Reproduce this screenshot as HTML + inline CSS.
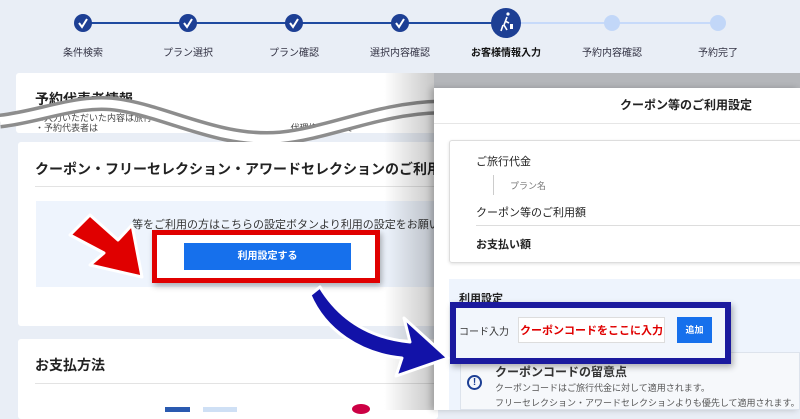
<!DOCTYPE html>
<html><head><meta charset="utf-8"><style>
*{margin:0;padding:0;box-sizing:border-box}
body{width:800px;height:410px;overflow:hidden;background:#e9eef6;font-family:"Liberation Sans","Noto Sans CJK JP",sans-serif;position:relative;color:#222}
.a{position:absolute}
.lbl{position:absolute;top:44px;font-size:10px;color:#334;width:100px;text-align:center}
.card{position:absolute;background:#fff;border-radius:3px}
</style></head><body>
<div class="a" style="left:83px;top:22px;width:423px;height:2px;background:#1f4aa0"></div>
<div class="a" style="left:506px;top:22px;width:212px;height:2px;background:#c7dafa"></div>
<svg class="a" style="left:0;top:0" width="800" height="45">
<g fill="#1d3f94">
<circle cx="83" cy="23" r="9"/><circle cx="188" cy="23" r="9"/><circle cx="294" cy="23" r="9"/><circle cx="400" cy="23" r="9"/><circle cx="506" cy="23" r="15"/></g>
<g fill="#c2d7f8"><circle cx="612" cy="23" r="8"/><circle cx="718" cy="23" r="8"/></g>
<g stroke="#fff" stroke-width="2" fill="none"><path d="M79 23l3 4 5-8M184 23l3 4 5-8M290 23l3 4 5-8M396 23l3 4 5-8"/>
<path d="M507 17l-3 8 3 5M505 21l4 2M503 25l-2 6" stroke-width="1.6"/></g>
<circle cx="508" cy="14" r="1.6" fill="#fff"/><rect x="510" y="24" width="3" height="5" fill="#fff"/>
</svg>
<div class="lbl" style="left:33px">条件検索</div>
<div class="lbl" style="left:138px">プラン選択</div>
<div class="lbl" style="left:244px">プラン確認</div>
<div class="lbl" style="left:350px">選択内容確認</div>
<div class="lbl" style="left:456px;font-weight:bold;color:#111">お客様情報入力</div>
<div class="lbl" style="left:562px">予約内容確認</div>
<div class="lbl" style="left:668px">予約完了</div>

<div class="card" style="left:16px;top:73px;width:502px;height:60px"></div>
<div class="card" style="left:534px;top:73px;width:266px;height:60px;background:#f3f4f6"></div>
<div class="a" style="left:35px;top:89px;font-size:14px;font-weight:bold">予約代表者情報</div>
<div class="a" style="left:35px;top:111px;font-size:9px;color:#444">※入力いただいた内容は旅行</div>
<div class="a" style="left:35px;top:121px;font-size:9px;color:#444">・予約代表者は <span style="margin-left:190px">代理権を有して</span></div>
<svg class="a" style="left:0;top:93px" width="440" height="60">
<path d="M0 28 C40 24,80 5,120 12 C170 20,220 50,280 45 C330 40,380 15,440 14" fill="none" stroke="#8d8d8d" stroke-width="15"/>
<path d="M0 28 C40 24,80 5,120 12 C170 20,220 50,280 45 C330 40,380 15,440 14" fill="none" stroke="#fff" stroke-width="8"/>
</svg>

<div class="card" style="left:18px;top:142px;width:420px;height:184px"></div>
<div class="a" style="left:35px;top:159px;font-size:14px;font-weight:bold;white-space:nowrap">クーポン・フリーセレクション・アワードセレクションのご利用</div>
<div class="a" style="left:35px;top:186px;width:400px;height:1px;background:#e3e3e3"></div>
<div class="a" style="left:36px;top:201px;width:400px;height:86px;background:#eef4fd"></div>
<div class="a" style="left:132px;top:216px;font-size:11px;color:#333;white-space:nowrap">等をご利用の方はこちらの設定ボタンより利用の設定をお願いします</div>
<div class="a" style="left:152px;top:230px;width:228px;height:53px;border:5px solid #e00000;background:#fff;box-shadow:2px 3px 6px rgba(0,0,0,.3)"></div>
<div class="a" style="left:184px;top:243px;width:167px;height:27px;background:#1670ec;color:#fff;font-size:10px;font-weight:bold;text-align:center;line-height:27px">利用設定する</div>
<svg class="a" style="left:60px;top:195px" width="100" height="90"><path d="M10 40 L30 20 L58 45 L72 30 L82 82 L30 70 L44 58 Z" fill="#e00000" stroke="#fff" stroke-width="3" stroke-linejoin="round"/></svg>

<div class="card" style="left:18px;top:339px;width:420px;height:80px"></div>
<div class="a" style="left:35px;top:355px;font-size:14px;font-weight:bold">お支払方法</div>
<div class="a" style="left:35px;top:383px;width:400px;height:1px;background:#e3e3e3"></div>
<div class="a" style="left:165px;top:407px;width:25px;height:5px;background:#2a5ab0"></div>
<div class="a" style="left:203px;top:407px;width:34px;height:5px;background:#cfe0f5"></div>
<div class="a" style="left:352px;top:404px;width:18px;height:10px;border-radius:50%;background:#c04"></div>

<div class="a" style="left:384px;top:73px;width:50px;height:337px;background:linear-gradient(90deg,rgba(0,0,0,0),rgba(0,0,0,.22))"></div>
<div class="a" style="left:434px;top:73px;width:366px;height:16px;background:#b4b6ba"></div>

<div class="a" style="left:434px;top:88px;width:366px;height:322px;background:#fff;box-shadow:-3px 0 6px rgba(0,0,0,.2)"></div>
<div class="a" style="left:620px;top:96px;font-size:12px;font-weight:bold;white-space:nowrap">クーポン等のご利用設定</div>
<div class="a" style="left:434px;top:123px;width:366px;height:1px;background:#e6e6e6"></div>
<div class="a" style="left:449px;top:140px;width:360px;height:123px;border:1px solid #ddd;border-radius:3px;box-shadow:0 1px 3px rgba(0,0,0,.12)"></div>
<div class="a" style="left:476px;top:153px;font-size:11px">ご旅行代金</div>
<div class="a" style="left:493px;top:175px;width:1px;height:20px;background:#ccc"></div>
<div class="a" style="left:510px;top:179px;font-size:9px;color:#777">プラン名</div>
<div class="a" style="left:476px;top:204px;font-size:11px">クーポン等のご利用額</div>
<div class="a" style="left:476px;top:225px;width:324px;height:1px;background:#ddd"></div>
<div class="a" style="left:476px;top:236px;font-size:11px;font-weight:bold">お支払い額</div>
<div class="a" style="left:449px;top:279px;width:351px;height:131px;background:#eef4fd"></div>
<div class="a" style="left:459px;top:290px;font-size:11px;font-weight:bold">利用設定</div>
<div class="a" style="left:460px;top:352px;width:340px;height:58px;background:#f6f8fb;border:1px solid #dde3ec"></div>
<div class="a" style="left:450px;top:302px;width:281px;height:62px;border:6px solid #1b1a9e;background:#f2f6fc;box-shadow:2px 3px 6px rgba(0,0,0,.3)"></div>
<div class="a" style="left:459px;top:323px;font-size:10px;color:#333">コード入力</div>
<div class="a" style="left:518px;top:317px;width:147px;height:26px;background:#fff;border:1px solid #ddd;color:#e00000;font-size:11px;font-weight:bold;text-align:center;line-height:26px">クーポンコードをここに入力</div>
<div class="a" style="left:677px;top:317px;width:35px;height:26px;background:#1670ec;color:#fff;font-size:9px;font-weight:bold;text-align:center;line-height:26px">追加</div>
<div class="a" style="left:495px;top:363px;font-size:12px;font-weight:bold;color:#333">クーポンコードの留意点</div>
<div class="a" style="left:467px;top:375px;width:15px;height:15px;border:2px solid #1d3f94;border-radius:50%;color:#1d3f94;font-size:10px;font-weight:bold;text-align:center;line-height:11px">!</div>
<div class="a" style="left:495px;top:381px;font-size:9px;color:#555;line-height:15px;white-space:nowrap">クーポンコードはご旅行代金に対して適用されます。<br>フリーセレクション・アワードセレクションよりも優先して適用されます。</div>

<svg class="a" style="left:300px;top:270px" width="160" height="110"><path d="M20 17 C40 50,70 68,110 72 L104 48 L148 88 L96 106 L102 88 C60 84,25 60,10 25 Z" fill="#1212a8" stroke="#fff" stroke-width="3" stroke-linejoin="round"/></svg>
</body></html>
